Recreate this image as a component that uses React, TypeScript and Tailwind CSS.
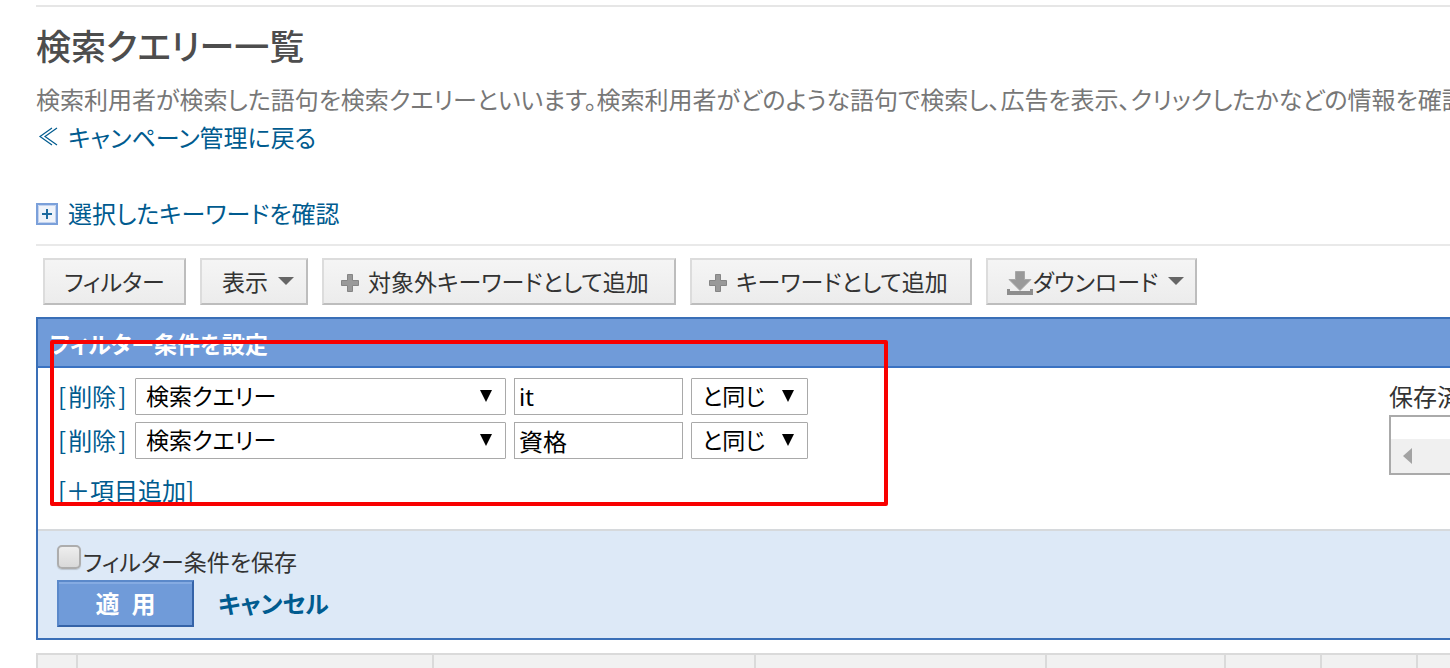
import { useState } from 'react'

interface FilterRow {
  id: number
  field: string
  value: string
  match: string
}

const INITIAL_ROWS: FilterRow[] = [
  { id: 1, field: '検索クエリー', value: 'it', match: 'と同じ' },
  { id: 2, field: '検索クエリー', value: '資格', match: 'と同じ' },
]

export default function App() {
  return (
    <div className="overflow-hidden bg-white pt-[5px] pl-9 font-['Noto_Sans_CJK_JP',sans-serif] text-[24px] leading-9 whitespace-nowrap text-[#333] [font-feature-settings:'palt']">
      <header className="border-t-2 border-[#e6e6e6] pt-[18px]">
        <h1 className="text-[35px] leading-10 font-medium text-[#4d4d4d]">検索クエリー一覧</h1>
        <p className="mt-4 text-[#777]">
          検索利用者が検索した語句を検索クエリーといいます。検索利用者がどのような語句で検索し、広告を表示、クリックしたかなどの情報を確認で
        </p>
        <a href="#campaigns" className="mt-0.5 flex items-center gap-2 text-[#005b8f]">
          <BackIcon />
          キャンペーン管理に戻る
        </a>
      </header>

      <button type="button" aria-expanded="false" className="mt-10 flex cursor-pointer items-center gap-2 text-[#005b8f]">
        <ExpandIcon />
        選択したキーワードを確認
      </button>

      <Toolbar />
      <FilterPanel />
      <ResultTable />
    </div>
  )
}

function Toolbar() {
  return (
    <div className="mt-[13px] flex gap-[14px] border-t-2 border-[#e9e9e9] py-3 pl-[7px] text-[23px]">
      <ToolbarButton className="w-[143px] justify-center">フィルター</ToolbarButton>
      <ToolbarButton className="w-[108px] justify-center gap-[10px] pl-2"><span>表示</span><CaretIcon /></ToolbarButton>
      <ToolbarButton className="w-[354px] gap-2 pl-4"><PlusIcon /><span>対象外キーワードとして追加</span></ToolbarButton>
      <ToolbarButton className="w-[282px] gap-2 pl-4"><PlusIcon /><span>キーワードとして追加</span></ToolbarButton>
      <ToolbarButton className="w-[211px] justify-center gap-[10px] pl-2"><span className="flex items-center"><DownloadIcon />ダウンロード</span><CaretIcon /></ToolbarButton>
    </div>
  )
}

function ToolbarButton({ className, children }: { className: string; children: React.ReactNode }) {
  return (
    <button
      type="button"
      className={`flex h-[47px] shrink-0 cursor-pointer items-center border-2 border-t-[#dcdcdc] border-r-[#bdbdbd] border-b-[#bdbdbd] border-l-[#dcdcdc] bg-linear-to-b from-[#f5f5f5] to-[#ececec] pb-0.5 ${className}`}
    >
      {children}
    </button>
  )
}

function FilterPanel() {
  const [rows, setRows] = useState(INITIAL_ROWS)

  const update = (id: number, patch: Partial<FilterRow>) =>
    setRows(rows.map((row) => (row.id === id ? { ...row, ...patch } : row)))
  const remove = (id: number) => setRows(rows.filter((row) => row.id !== id))
  const add = () => setRows([...rows, { id: Date.now(), field: '検索クエリー', value: '', match: 'と同じ' }])

  return (
    <section className="relative border-2 border-r-0 border-[#3a6fb7]">
      <h2 className="h-[49px] border-b-2 border-[#3a72c2] bg-[#709bd9] pt-1.5 pl-3 text-[23px] font-bold text-white">フィルター条件を設定</h2>

      <div className="flex justify-between bg-white pt-[10px] pb-[21px] pl-5">
        <div>
          <div className="flex flex-col gap-[7px]">
            {rows.map((row) => (
              <div key={row.id} className="flex h-[37px] items-center">
                <button type="button" onClick={() => remove(row.id)} className="flex w-[77px] cursor-pointer gap-[2px] pb-px text-[#005b8f]">
                  [<span>削除</span>]
                </button>
                <SelectBox label="項目" className="w-[371px]" value={row.field} options={['検索クエリー', 'キーワード']} onChange={(field) => update(row.id, { field })} />
                <input
                  type="text"
                  aria-label="値"
                  value={row.value}
                  onChange={(e) => update(row.id, { value: e.target.value })}
                  className="mx-2 h-[37px] w-[169px] border border-[#a9a9a9] bg-white px-1 pb-px font-['Noto_Sans','Noto_Sans_CJK_JP',sans-serif] text-black"
                />
                <SelectBox label="条件" className="w-[117px]" value={row.match} options={['と同じ', 'を含む']} onChange={(match) => update(row.id, { match })} />
              </div>
            ))}
          </div>
          <button type="button" onClick={add} className="mt-[13px] block cursor-pointer text-[#005b8f]">[＋項目追加]</button>
        </div>

        <div className="w-[61px]">
          <div className="h-[37px]">保存済み</div>
          <div role="listbox" aria-label="保存済み" className="h-[60px] border-2 border-r-0 border-[#aaa] bg-white pt-[22px]">
            <button type="button" aria-label="左へスクロール" className="flex h-[34px] w-full items-center bg-[#f0f0f0] pl-3">
              <svg aria-hidden="true" viewBox="0 0 9 16" className="h-4 w-[9px]" fill="#a3a3a3"><path d="M9 0v16L0 8z" /></svg>
            </button>
          </div>
        </div>
      </div>

      <div className="border-t-2 border-[#d6d9dc] bg-[#dde9f7] pt-3 pb-[11px] pl-[19px]">
        <label className="flex h-[37px] w-fit items-start text-[23px]">
          <input type="checkbox" className="mt-[2px] mr-[2px] size-6 appearance-none rounded-[5px] border-2 border-[#adadad] bg-linear-to-b from-[#eeeeee] to-[#d9d9d9] shadow-[0_1px_1px_#bcc5cf] checked:from-[#709bd9] checked:to-[#3a72c2]" />
          フィルター条件を保存
        </label>
        <div className="flex items-center font-bold">
          <button type="button" className="h-[47px] w-[137px] cursor-pointer border-2 border-t-[#5b89ca] border-r-[#3563a8] border-b-[#3563a8] border-l-[#5b89ca] bg-[#709bd9] pb-0.5 text-white shadow-[inset_0_2px_0_#85abe2]">適&ensp;用</button>
          <a href="#cancel" className="ml-6 pb-0.5 text-[#005b8f]">キャンセル</a>
        </div>
      </div>

      <div aria-hidden="true" className="pointer-events-none absolute top-[21px] left-3 h-[166px] w-[838px] rounded-[2px] border-4 border-[#f80000]" />
    </section>
  )
}

interface SelectBoxProps {
  label: string
  className: string
  value: string
  options: string[]
  onChange: (value: string) => void
}

function SelectBox({ label, className, value, options, onChange }: SelectBoxProps) {
  return (
    <div className={`relative text-[23px] ${className}`}>
      <select
        aria-label={label}
        value={value}
        onChange={(e) => onChange(e.target.value)}
        className="block h-[37px] w-full appearance-none rounded-[1px] border border-[#a9a9a9] bg-white pb-0.5 pl-[10px] leading-[33px] text-black"
      >
        {options.map((option) => <option key={option}>{option}</option>)}
      </select>
      <svg aria-hidden="true" viewBox="0 0 12 12" className="pointer-events-none absolute top-3 right-[14px] size-3"><path d="M0 0h12L6 12z" /></svg>
    </div>
  )
}

function ResultTable() {
  return (
    <table aria-label="検索クエリー一覧" className="mt-[13px] w-full table-fixed border-separate border-spacing-0 bg-[#f1f1f1]">
      <colgroup>
        <col className="w-10" />
        <col className="w-[356px]" />
        <col className="w-[322px]" />
        <col className="w-[291px]" />
        <col className="w-[179px]" />
        <col className="w-24" />
        <col className="w-24" />
        <col />
      </colgroup>
      <thead>
        <tr>
          {Array.from({ length: 8 }, (_, i) => (
            <th key={i} scope="col" className="h-[15px] border-t-2 border-l-2 border-[#dadada] p-0" />
          ))}
        </tr>
      </thead>
    </table>
  )
}

function BackIcon() { return <svg aria-hidden="true" viewBox="0 0 24 24" className="size-6" fill="none" stroke="currentColor" strokeWidth="1.2"><path d="M16 3 4 11.500 16 20M21 3 9 11.500 21 20" /></svg> }
function ExpandIcon() { return <svg aria-hidden="true" viewBox="0 0 24 24" className="size-6" fill="none"><path d="M1 3h20v20H1z" fill="#eff3fa" stroke="#7ba0da" strokeWidth="2" /><path d="M2.500 4.500h17v17h-17z" stroke="#c2d2ee" /><path d="M11 8v10M6 13h10" stroke="#1d6a9e" strokeWidth="2" /></svg> }
function CaretIcon() { return <svg aria-hidden="true" viewBox="0 0 16 8" className="h-2 w-4" fill="#666"><path d="M0 0h16L8 8z" /></svg> }
function PlusIcon() { return <svg aria-hidden="true" viewBox="0 0 20 20" className="mt-1 size-5" fill="#999" stroke="#858585"><path d="M7.500 1.500h5v6h6v5h-6v6h-5v-6h-6v-5h6z" /></svg> }
function DownloadIcon() { return <svg aria-hidden="true" viewBox="0 0 26 26" className="mt-1 size-[26px]"><path d="M8.500 1.500h9v8h6.500L13 20.500 2 9.500h6.500z" fill="#999" stroke="#a8a8a8" /><path d="M0 19h3v2h20v-2h3v6H0z" fill="#8d8d8d" /></svg> }
